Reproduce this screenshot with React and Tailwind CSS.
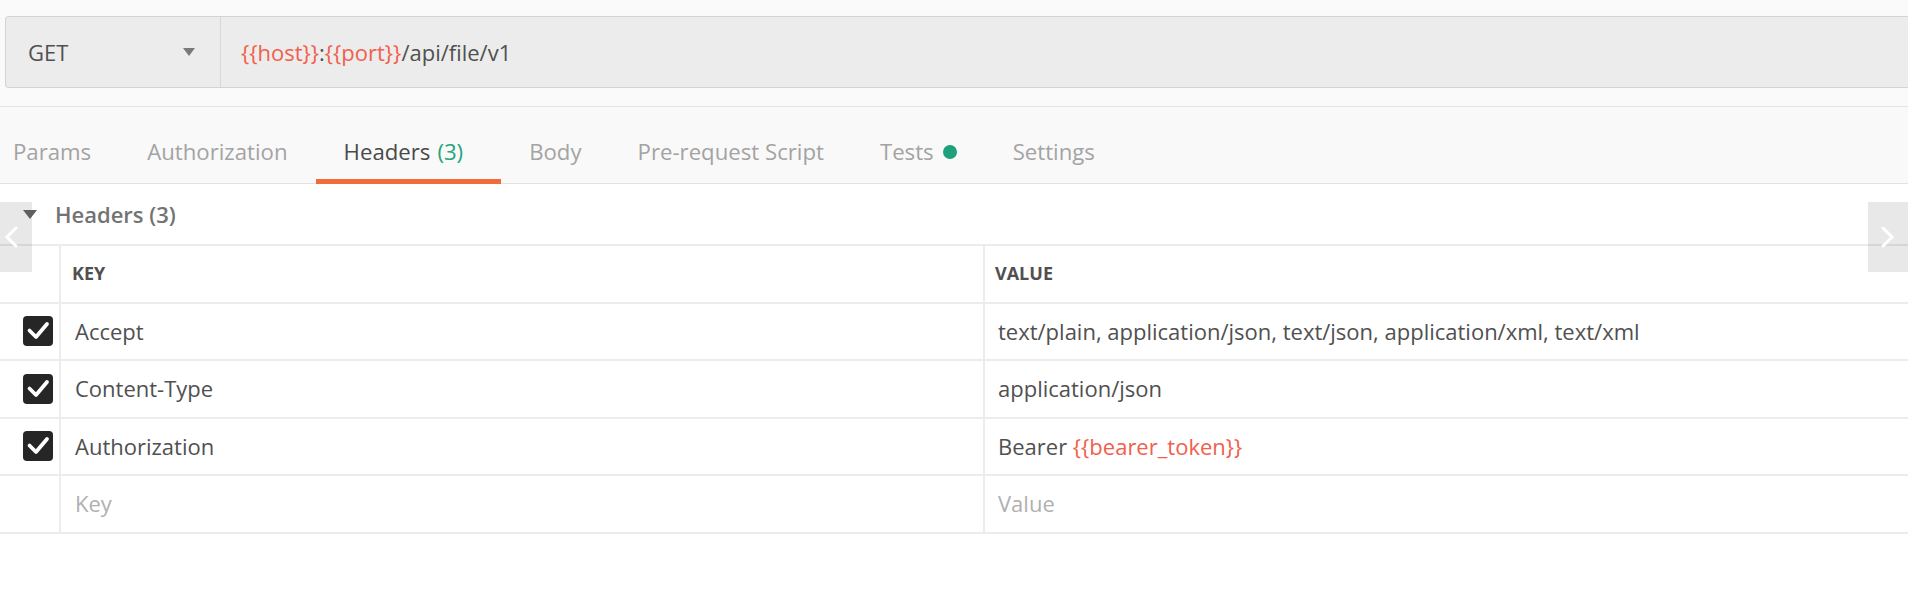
import { useState } from 'react';

const font = { fontFamily: '"Open Sans", "Noto Sans", sans-serif' };

function Var({ children }) {
    return <span className="text-[#f0604d]">{children}</span>;
}

function CheckBox() {
    return (
        <div className="w-[30px] h-[30px] rounded-[4px] bg-[#262626] flex items-center justify-center">
            <svg width="30" height="30" viewBox="0 0 30 30" fill="none">
                <path d="M6.5 14.5l6.5 6.5 11-13" stroke="white" strokeWidth="3.8" strokeLinecap="round" strokeLinejoin="round" />
            </svg>
        </div>
    );
}

const tabs = [
    { label: 'Params' },
    { label: 'Authorization' },
    { label: 'Headers', count: '(3)' },
    { label: 'Body' },
    { label: 'Pre-request Script' },
    { label: 'Tests', dot: true },
    { label: 'Settings' },
];

const rows = [
    { key: 'Accept', value: 'text/plain, application/json, text/json, application/xml, text/xml' },
    { key: 'Content-Type', value: 'application/json' },
    { key: 'Authorization', value: <>Bearer <Var>{'{{bearer_token}}'}</Var></> },
];

export default function App() {
    const [active] = useState('Headers');

    return (
        <div className="relative w-[1908px] h-[613px] bg-white overflow-hidden text-[22px]" style={font}>
            {/* URL bar */}
            <div className="bg-[#fafafa] pt-[16px] pb-[18px] pl-[5px] border-b border-[#e4e4e4]">
                <div className="flex h-[72px] bg-[#ececec] border border-r-0 border-[#d4d4d4] rounded-l-[4px]">
                    <div className="w-[215px] flex items-center justify-between pl-[22px] pr-[24px] border-r border-[#d8d8d8] text-[#505050]">
                        <span>GET</span>
                        <svg width="14" height="10" viewBox="0 0 14 10">
                            <path d="M1 1h12L7 9z" fill="#7a7a7a" />
                        </svg>
                    </div>
                    <div className="flex items-center pl-[20px] text-[#505050]">
                        <span>
                            <Var>{'{{host}}'}</Var>:<Var>{'{{port}}'}</Var>/api/file/v1
                        </span>
                    </div>
                </div>
            </div>

            {/* Tabs */}
            <div className="flex h-[77px] bg-[#f9f9f9] border-b border-[#e2e2e2] pl-[13px] text-[22.2px]">
                {tabs.map((t, i) => (
                    <div
                        key={t.label}
                        className={`relative flex items-center pt-[13px] ${i === 0 ? 'pr-[28px]' : 'pl-[28px]'} ${
                            i === 0 ? '' : t.count ? 'pr-[38px]' : 'pr-[28px]'
                        } ${t.label === active ? 'text-[#4a4a4a]' : 'text-[#a3a3a3]'}`}
                    >
                        <span>{t.label}</span>
                        {t.count && <span className="ml-[7px] text-[#26a57c]">{t.count}</span>}
                        {t.dot && <span className="ml-[9px] w-[14px] h-[14px] rounded-full bg-[#1ca17a]"></span>}
                        {t.label === active && (
                            <div className="absolute left-0 right-0 bottom-[-1px] h-[5px] bg-[#f26b3a]"></div>
                        )}
                    </div>
                ))}
            </div>

            {/* Section title */}
            <div className="relative z-10 flex items-center h-[60px] pl-[23px] text-[#737373]">
                <svg width="14" height="9" viewBox="0 0 14 9">
                    <path d="M0 0h14L7 9z" fill="#5f5f5f" />
                </svg>
                <span className="ml-[18px] font-semibold">Headers (3)</span>
            </div>

            {/* Table */}
            <div className="border-t-[2px] border-[#ececec]">
                <div className="flex h-[57.5px] border-b-[2px] border-[#ececec] text-[18px] font-bold text-[#505050]">
                    <div className="w-[61px] border-r-[2px] border-[#ececec]"></div>
                    <div className="w-[924px] flex items-center pl-[11px] border-r-[2px] border-[#ececec]">KEY</div>
                    <div className="flex-1 flex items-center pl-[10px]">VALUE</div>
                </div>
                {rows.map((r) => (
                    <div key={r.key} className="flex h-[57.5px] border-b-[2px] border-[#ececec] text-[#505050]">
                        <div className="w-[61px] flex items-center justify-end pr-[6px] border-r-[2px] border-[#ececec]">
                            <CheckBox />
                        </div>
                        <div className="w-[924px] flex items-center pl-[14px] border-r-[2px] border-[#ececec]">{r.key}</div>
                        <div className="flex-1 flex items-center pl-[13px]">
                            <span>{r.value}</span>
                        </div>
                    </div>
                ))}
                <div className="flex h-[57.5px] border-b-[2px] border-[#ececec] text-[#b0b0b0]">
                    <div className="w-[61px] border-r-[2px] border-[#ececec]"></div>
                    <div className="w-[924px] flex items-center pl-[14px] border-r-[2px] border-[#ececec]">Key</div>
                    <div className="flex-1 flex items-center pl-[13px]">Value</div>
                </div>
            </div>

            {/* Scroll arrows */}
            <div className="absolute left-0 top-[202px] w-[32px] h-[70px] bg-black/[0.09] flex items-center pl-[4px]">
                <svg width="14" height="22" viewBox="0 0 14 22">
                    <path d="M12 2L3 11l9 9" stroke="white" strokeWidth="3" fill="none" strokeLinecap="round" />
                </svg>
            </div>
            <div className="absolute right-0 top-[202px] w-[40px] h-[70px] bg-black/[0.09] flex items-center justify-center">
                <svg width="14" height="22" viewBox="0 0 14 22">
                    <path d="M2 2l9 9-9 9" stroke="white" strokeWidth="3" fill="none" strokeLinecap="round" />
                </svg>
            </div>
        </div>
    );
}
